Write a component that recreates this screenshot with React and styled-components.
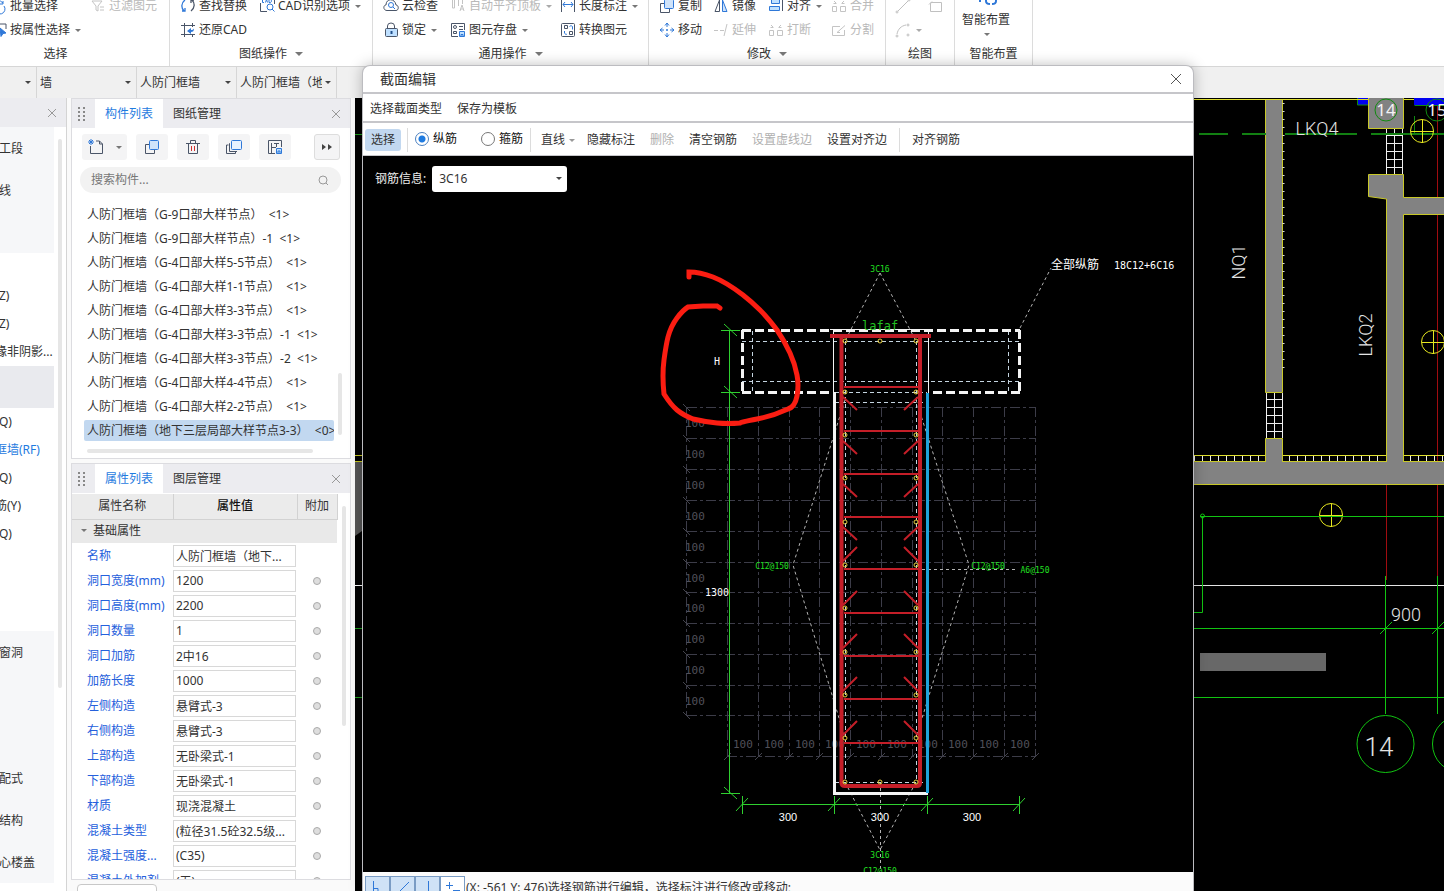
import React, { useState } from "react";
import styled, { createGlobalStyle } from "styled-components";

const GlobalStyle = createGlobalStyle`
  * { box-sizing: border-box; }
  body {
    margin: 0;
    overflow: hidden;
    background: #fff;
    color: #333;
    font: 12px/16px "Noto Sans", "Noto Sans CJK SC", sans-serif;
  }
  button, input, select { font: inherit; color: inherit; margin: 0; }
  button { padding: 0; border: 0; background: none; white-space: nowrap; }
  ul { margin: 0; padding: 0; list-style: none; }
`;

const Page = styled.div`
  position: relative;
  display: flex;
  flex-direction: column;
  height: 100vh;
  overflow: hidden;
`;

/* ribbon */
const Ribbon = styled.header`
  display: flex;
  align-items: flex-end;
  flex: none;
  height: 66px;
  margin-left: -58px;
  overflow: hidden;
  background: #fff;
`;
const Group = styled.section`
  flex: none;
  width: ${(p) => p.$width}px;
  height: 72px;
  border-right: 1px solid #dcdcdc;
`;
const ToolGrid = styled.div`
  display: grid;
  grid-template-columns: ${(p) => p.$cols};
  grid-auto-rows: 24px;
  height: 48px;
  padding-left: ${(p) => p.$pad}px;
`;
const Tool = styled.button`
  display: flex;
  align-items: center;
  gap: 3px;
  color: ${(p) => (p.disabled ? "#b9b9b9" : "#333")};
`;
const BigTool = styled.button`
  display: flex;
  flex-direction: column;
  align-items: center;
  justify-content: flex-end;
  gap: 5px;
  width: 48px;
  height: 48px;
  margin-left: 7px;
  padding-bottom: 6px;
`;
const GroupLabel = styled.div`
  display: flex;
  align-items: center;
  justify-content: center;
  gap: 6px;
  height: 23px;
`;
const Caret = styled.i`
  flex: none;
  border: ${(p) => p.$size || 3}px solid transparent;
  border-top-color: ${(p) => p.$color || "#777"};
  border-bottom: 0;
  margin-left: 2px;
`;

/* selector strip */
const Strip = styled.div`
  display: flex;
  flex: none;
  height: 32px;
  background: #f0f0f0;
  border-top: 1px solid #d6d6d6;
`;
const Picker = styled.div`
  display: grid;
  align-items: center;
  flex: none;
  width: ${(p) => p.$width}px;
  border-right: 1px solid #d6d6d6;
  select {
    grid-area: 1 / 1;
    width: 100%;
    height: 100%;
    padding: 0 14px 0 3px;
    border: 0;
    outline: 0;
    background: none;
    appearance: none;
  }
  i {
    grid-area: 1 / 1;
    justify-self: end;
    margin-right: 5px;
    pointer-events: none;
  }
`;

const Main = styled.div`
  display: flex;
  flex: 1;
  min-height: 0;
  background: #fafafa;
`;

/* module tree at the left edge */
const Modules = styled.nav`
  flex: none;
  width: 67px;
  overflow: hidden;
  background: #fff;
  border-right: 1px solid #d4d4d4;
`;
const ModulesHead = styled.div`
  display: flex;
  align-items: center;
  justify-content: flex-end;
  height: 29px;
  padding-right: 6px;
  background: #ececf0;
`;
const ModulesBody = styled.div`
  display: flex;
  justify-content: space-between;
  align-items: flex-start;
  padding-right: 4px;
`;
const ModuleList = styled.ul`
  width: 54px;
`;
const Module = styled.li`
  height: ${(p) => p.$height}px;
  background: ${(p) => p.$bg || "transparent"};
  a {
    display: block;
    margin-left: ${(p) => (p.$cut ? -5 : -1)}px;
    padding-top: ${(p) => (p.$height > 28 ? 1 : 0)}px;
    line-height: ${(p) => p.$height}px;
    color: ${(p) => (p.$active ? "#1f7be0" : "#333")};
    text-decoration: none;
    white-space: nowrap;
  }
`;
const Thumb = styled.div`
  flex: none;
  width: 4px;
  height: ${(p) => p.$height}px;
  margin-top: ${(p) => p.$top || 0}px;
  border-radius: 2px;
  background: #e6e6e6;
`;

/* docked panels */
const Dock = styled.aside`
  display: flex;
  flex-direction: column;
  flex: none;
  gap: 4px;
  width: 288px;
  padding: 0 4px;
`;
const Panel = styled.section`
  flex: ${(p) => (p.$height ? "none" : "1")};
  height: ${(p) => (p.$height ? p.$height + "px" : "auto")};
  min-height: 0;
  overflow: hidden;
  background: #fff;
  border: 1px solid #dcdce0;
`;
const PanelHead = styled.div`
  display: flex;
  align-items: center;
  height: 29px;
  padding-right: 6px;
  background: #ececf0;
  > svg { margin-right: 7px; }
  button:last-child { margin-left: auto; }
`;
const PanelTab = styled.button`
  width: 68px;
  height: 29px;
  color: ${(p) => (p.$active ? "#1f7be0" : "#333")};
  background: ${(p) => (p.$active ? "#fff" : "none")};
`;
const CloseButton = styled.button`
  display: flex;
  color: ${(p) => p.$color || "#999"};
`;
const PanelTools = styled.div`
  display: flex;
  gap: 9px;
  padding: 6px 10px 7px;
`;
const PanelTool = styled.button`
  display: flex;
  align-items: center;
  justify-content: center;
  gap: ${(p) => (p.$split ? 10 : 0)}px;
  width: ${(p) => (p.$split ? 45 : 32)}px;
  height: 26px;
  border-radius: 3px;
  background: #f4f4f5;
  &:last-child {
    width: 26px;
    margin-left: auto;
    border: 1px solid #ddd;
  }
`;
const Search = styled.label`
  display: flex;
  align-items: center;
  height: 26px;
  margin: 0 9px 10px 8px;
  padding: 0 10px 0 11px;
  border-radius: 13px;
  background: #f2f2f2;
  input {
    flex: 1;
    min-width: 0;
    padding: 0;
    border: 0;
    outline: 0;
    background: none;
  }
  input::placeholder { color: #777; opacity: 1; }
`;
const ListArea = styled.div`
  display: flex;
  padding-left: 12px;
`;
const Components = styled.ul`
  width: 250px;
  margin-right: 4px;
`;
const ComponentRow = styled.li`
  height: 24px;
  padding-top: 1px;
  button {
    width: 100%;
    height: 21px;
    padding: 0 3px;
    overflow: hidden;
    border-radius: 2px;
    text-align: left;
    white-space: pre;
    background: ${(p) => (p.$selected ? "#c2d8f0" : "none")};
  }
`;
const HThumb = styled.div`
  width: 226px;
  height: 4px;
  margin: 6px 0 0 15px;
  border-radius: 2px;
  background: #e6e6e6;
`;

const PropertyArea = styled.div`
  display: flex;
  align-items: flex-start;
  gap: 4px;
  padding-top: 1px;
`;
const PropertyTable = styled.table`
  width: 265px;
  flex: none;
  table-layout: fixed;
  border-collapse: collapse;
  th, td { padding: 0; font-weight: 400; text-align: left; white-space: nowrap; }
  thead th {
    height: 25px;
    text-align: center;
    background: #ebebeb;
    border: solid #d2d2d2;
    border-width: 0 1px 1px 0;
  }
  thead th:nth-child(2) { font-weight: 500; color: #111; }
`;
const SectionCell = styled.th`
  height: 24px;
  background: #e9e9e9;
  i { display: inline-block; margin: 0 6px 3px 9px; }
`;
const PropertyRow = styled.tr`
  height: 25px;
  th { padding-left: 15px; color: #2560dc; }
  input[type="text"] {
    display: block;
    width: 123px;
    height: 22px;
    padding: 0 2px;
    border: 1px solid #d8d8d8;
    outline: 0;
    text-overflow: ellipsis;
  }
  input[type="checkbox"] {
    display: block;
    width: 8px;
    height: 8px;
    margin: 0 auto;
    border: 1px solid #aaa;
    border-radius: 50%;
    background: #dedede;
    appearance: none;
  }
`;
const DockFoot = styled.div`
  flex: none;
  height: 7px;
  padding-left: 6px;
  overflow: hidden;
  button {
    display: block;
    width: 80px;
    height: 24px;
    border: 1px solid #c8c8c8;
    border-radius: 4px;
    background: #fff;
  }
`;

const ModelView = styled.div`
  display: flex;
  justify-content: space-between;
  flex: 1;
  min-width: 0;
  overflow: hidden;
  background: #000;
  svg { flex: none; }
`;

/* section editor window */
const Dialog = styled.div`
  position: absolute;
  top: 65px;
  left: 362px;
  right: 250px;
  bottom: 0;
  display: flex;
  flex-direction: column;
  overflow: hidden;
  background: #fff;
  border: 1px solid #bcbcc0;
  border-bottom: 0;
  border-radius: 8px 8px 0 0;
  box-shadow: 0 0 14px rgba(0, 0, 0, 0.25);
`;
const TitleBar = styled.div`
  display: flex;
  align-items: center;
  justify-content: space-between;
  flex: none;
  height: 28px;
  padding: 0 9px 0 17px;
  font-size: 14px;
  border-bottom: 2px solid #c6c6ca;
`;
const MenuBar = styled.div`
  display: flex;
  align-items: center;
  flex: none;
  gap: 15px;
  height: 29px;
  padding: 2px 0 0 7px;
  border-bottom: 2px solid #c6c6ca;
`;
const ToolBar = styled.div`
  display: flex;
  align-items: center;
  flex: none;
  height: 33px;
  padding: 2px 0 0 2px;
  border-bottom: 1px solid #c6c6ca;
`;
const ToolBarButton = styled.button`
  display: flex;
  align-items: center;
  gap: 2px;
  height: 22px;
  margin-right: ${(p) => (p.$on ? 6 : p.$tight ? 12 : 15)}px;
  padding: 0 ${(p) => (p.$on ? 6 : 0)}px;
  border-radius: 3px;
  background: ${(p) => (p.$on ? "#c2d8f0" : "none")};
  color: ${(p) => (p.disabled ? "#b0b0b0" : "#333")};
`;
const Divider = styled.span`
  width: 1px;
  height: 24px;
  margin-right: ${(p) => p.$after}px;
  background: #dcdcdc;
`;
const RadioLabel = styled.label`
  display: flex;
  align-items: center;
  gap: 4px;
  width: 66px;
  margin-bottom: 2px;
  color: #111;
  &:last-of-type { width: 49px; }
  input {
    width: 14px;
    height: 14px;
    border: 1px solid #777;
    border-radius: 50%;
    background: #fff;
    appearance: none;
  }
  input:checked {
    border-color: #4a7fc0;
    background: radial-gradient(circle, #1f7be0 3px, #fff 4px);
  }
`;
const SectionView = styled.div`
  display: flex;
  flex-direction: column;
  flex: 1;
  min-height: 0;
  background: #000;
  svg { flex: 1; min-height: 0; width: 100%; }
`;
const RebarBar = styled.div`
  display: flex;
  align-items: center;
  flex: none;
  gap: 6px;
  height: 36px;
  padding: 9px 12px 0;
  color: #eee;
  ${Picker} {
    height: 26px;
    border: 0;
    border-radius: 3px;
    background: #fff;
    color: #333;
  }
  select { padding-left: 7px; }
`;
const StatusBar = styled.div`
  display: flex;
  align-items: flex-start;
  flex: none;
  height: 19px;
  overflow: hidden;
  padding: 4px 2px 0;
  background: #fbfbfb;
  span { line-height: 24px; margin-left: 1px; white-space: nowrap; }
`;
const SnapButton = styled.button`
  display: flex;
  align-items: center;
  justify-content: center;
  flex: none;
  width: 25px;
  height: 24px;
  border: 1px solid #7a9cc4;
  background: ${(p) => (p.$on ? "#cfe2f6" : "#fff")};
`;

const BLUE = "#2f78d8";
const INK = "#4a5568";
const icons = {
  batch: <path d="M3 8a5 5 0 0 1 9-3M12 3v3H9M13 8a5 5 0 1 1-9 3" stroke={BLUE} />,
  filter: (
    <path d="M2 3h10L8 8v5l-2-1V8zM10 9h4M10 12h4" stroke="#c4c4c4" />
  ),
  pick: (
    <g>
      <path d="M2 2h13v5M2 2v11h4" stroke={INK} />
      <path d="M9 6l6 5-3 .5-2 3z" fill={BLUE} stroke={BLUE} />
    </g>
  ),
  find: (
    <g>
      <path d="M5 2C1 5 1 10 4 13M2 13h3v-3" stroke={BLUE} strokeWidth="1.300" />
      <path d="M11 13c4-3 4-8 1-11M14 2h-3v3" stroke={INK} strokeWidth="1.300" />
    </g>
  ),
  cad: (
    <g>
      <path d="M1.500 5v8.500H8M4 .5H2M14 .5h1.500V6" stroke={INK} />
      <path d="M5 4.500H3.500v-3H5M6.500 4.500l1-3 1 3M10 4.500v-3h1c2 0 2 3 0 3z" stroke={BLUE} />
      <circle cx="11" cy="9" r="3" stroke={BLUE} />
      <path d="M13 11l2.500 2.500" stroke={BLUE} />
    </g>
  ),
  restore: (
    <g>
      <path d="M1 3.500h14M4.500 1v14M1 12.500h14M12.500 1v4M12.500 12v3" stroke={INK} />
      <path d="M7 9l4-3v2c3 0 3-2 3-2 0 3-1 4-3 4v2z" fill={BLUE} />
    </g>
  ),
  cloud: (
    <g>
      <path d="M4 12.500C0 12.500 0 7 3 7c0-7 9-7 10 0 3 0 3 5.500 0 5.500z" stroke={INK} />
      <circle cx="8" cy="7" r="2.500" stroke={BLUE} />
      <path d="M10 9l2 2" stroke={BLUE} />
    </g>
  ),
  flush: (
    <path d="M2.500 1v9h2V1M8.500 1v7M12.500 1v5M10 13l2-6 2 6M10.500 11h3" stroke="#c4c4c4" />
  ),
  length: (
    <g>
      <path d="M1.500 1v13M14.500 1v13" stroke={INK} />
      <path d="M3 6.500h10M5 4L3 6.500 5 9M11 4l2 2.500L11 9" stroke={BLUE} />
    </g>
  ),
  lock: (
    <g>
      <path d="M4.500 6V4a3.500 3 0 0 1 7 0v2" stroke={INK} />
      <rect x="2.500" y="6.500" width="12" height="8" rx="1" fill="#bfe0ff" stroke={INK} />
      <path d="M8.500 9v3" stroke="#20508c" strokeWidth="2" />
    </g>
  ),
  store: (
    <g>
      <path d="M8 14.500H1.500v-13h13V8M9 4.500h4M9 7.500h4" stroke={INK} />
      <circle cx="5" cy="5" r="1.500" stroke={INK} />
      <path d="M3.500 9.500h3v2h-3z" stroke={INK} />
      <path d="M9.500 9.500h5v5h-5zM11 12.500h2v2h-2z" stroke={BLUE} fill="#bfe0ff" />
    </g>
  ),
  convert: (
    <g>
      <rect x="1.500" y="1.500" width="13" height="13" rx="1" stroke={INK} />
      <path d="M4.500 3.500h3v3h-3zM9.500 9.500h3v3h-3z" stroke={INK} />
      <path d="M9.500 4.500c1-1 2-1 3 0v3M7 12c-1 1-2 0-2.500-1V9" stroke={BLUE} />
    </g>
  ),
  copy: (
    <g>
      <path d="M5 5.500H1.500v9h9V11" stroke={INK} />
      <rect x="5.500" y="1.500" width="9" height="9" rx="1" fill="#cfe3fa" stroke={BLUE} />
    </g>
  ),
  move: (
    <g stroke={BLUE}>
      <path d="M8 1v4M8 11v4M1 8h4M11 8h4M8 7v2M7 8h2" />
      <path d="M6 3.500L8 1l2 2.500M6 12.500L8 15l2-2.500M3.500 6L1 8l2.500 2M12.500 6L15 8l-2.500 2" />
    </g>
  ),
  mirror: (
    <g>
      <path d="M6.500 2v11.500H2z" stroke={INK} />
      <path d="M9.500 2v11.500H14z" fill="#cfe3fa" stroke={BLUE} />
    </g>
  ),
  extend: <path d="M1 8.500h4M7 8.500h4M11 14l3-12" stroke="#c4c4c4" />,
  align: (
    <g>
      <path d="M3.500 1.500h8v4h-8zM1.500 8.500h10v4h-10z" fill="#bfe0ff" stroke={BLUE} />
      <path d="M14.500 0v13" stroke={INK} />
    </g>
  ),
  pieces: (
    <path
      d="M1.500 8.500h4v5h-4zM9.500 8.500h5v5h-5zM3 3l2 2M13 3l-2 2M2.500 5.500h3M10.500 5.500h3"
      stroke="#c4c4c4"
    />
  ),
  split: <path d="M9 4.500H1.500v9h12V8M6 10.500l8-7M6 10.500h3" stroke="#c4c4c4" />,
  line: (
    <g stroke="#c0c0c0">
      <path d="M3 13L13 3" />
      <circle cx="2" cy="14" r="1" />
      <circle cx="14" cy="2" r="1" />
    </g>
  ),
  rect: <path d="M3 4.500h10.500v9H2.500V6zM1 6.500l3-3" stroke="#c0c0c0" />,
  arc: (
    <g stroke="#c0c0c0">
      <path d="M2 12c1-5 4-8 9-9" />
      <circle cx="2" cy="14" r="1" />
      <circle cx="13" cy="3" r="1" />
      <circle cx="13" cy="13" r="1" />
    </g>
  ),
  smart: (
    <g stroke={BLUE} strokeWidth="2">
      <path d="M2 8v3M8 6v4q0 3 4 3M18 6v4q0 3-4 3" />
    </g>
  ),
  newDoc: (
    <g>
      <path d="M2.500 7v7.500h12V5l-3-3H8M11.500 2v3h3" stroke={INK} />
      <path d="M1 1l4 4M5 1L1 5M3 0v6M0 3h6" stroke={BLUE} />
    </g>
  ),
  trash: (
    <g>
      <path d="M1 4.500h14M5.500 4V1.500h5V4M3.500 4.500v10h9v-10" stroke={INK} />
      <path d="M6.500 7v5M9.500 7v5" stroke="#d03030" />
    </g>
  ),
  layers: (
    <g>
      <path d="M2.500 6H.5v8.500h9v-2M4 4.500H3.500v8H11" stroke={INK} />
      <rect x="5.500" y="1.500" width="10" height="9" rx="1" fill="#e8f2ff" stroke={BLUE} />
    </g>
  ),
  save: (
    <g>
      <path d="M8 14.500H1.500v-13h13V8M4.500 14V4M4.500 8.500H9M9.500 4v4M12 4.500H7" stroke={INK} />
      <path d="M9.500 9.500h5v5h-5zM11 12h2v2.500h-2z" stroke={BLUE} fill="#bfe0ff" />
    </g>
  ),
  more: <path d="M3 5l4 3-4 3zM9 5l4 3-4 3z" fill="#444" />,
  search: (
    <g stroke="#999">
      <circle cx="8" cy="8" r="4" />
      <path d="M11 11l2 2" />
    </g>
  ),
  close: <path d="M4 4l8 8M12 4l-8 8" stroke="currentColor" />,
  bigClose: <path d="M3 3l10 10M13 3L3 13" stroke="currentColor" />,
  grip: (
    <path
      d="M6 2h2M11 2h2M6 6h2M11 6h2M6 10h2M11 10h2M6 14h2M11 14h2"
      stroke="#888"
      strokeWidth="2"
    />
  ),
  ortho: <path d="M3.500 1v11.500H12M3.500 8.500H8v4" stroke={BLUE} />,
  diagonal: <path d="M2 14L14 2" stroke={BLUE} />,
  vertical: <path d="M8.500 1v14" stroke={BLUE} />,
  cross: <path d="M1 5.500h7M4.500 2v7M8 10.500h7" stroke={BLUE} />,
};

const Icon = ({ name }) => (
  <svg width="16" height="16" viewBox="0 0 16 16" fill="none" overflow="visible" aria-hidden="true">
    {icons[name]}
  </svg>
);

const ribbonGroups = [
  {
    label: "选择",
    width: 228,
    pad: 49,
    cols: "99px 80px",
    tools: [
      { icon: "batch", text: "批量选择" },
      { icon: "filter", text: "过滤图元", disabled: true },
      { icon: "pick", text: "按属性选择", menu: true },
    ],
  },
  {
    label: "图纸操作",
    menu: true,
    width: 203,
    pad: 10,
    cols: "79px 110px",
    tools: [
      { icon: "find", text: "查找替换" },
      { icon: "cad", text: "CAD识别选项", menu: true },
      { icon: "restore", text: "还原CAD" },
    ],
  },
  {
    label: "通用操作",
    menu: true,
    width: 276,
    pad: 10,
    cols: "67px 110px 80px",
    tools: [
      { icon: "cloud", text: "云检查" },
      { icon: "flush", text: "自动平齐顶板", menu: true, disabled: true },
      { icon: "length", text: "长度标注", menu: true },
      { icon: "lock", text: "锁定", menu: true },
      { icon: "store", text: "图元存盘", menu: true },
      { icon: "convert", text: "转换图元" },
    ],
  },
  {
    label: "修改",
    menu: true,
    width: 237,
    pad: 10,
    cols: "54px 55px 63px 50px",
    tools: [
      { icon: "copy", text: "复制" },
      { icon: "mirror", text: "镜像" },
      { icon: "align", text: "对齐", menu: true },
      { icon: "pieces", text: "合并", disabled: true },
      { icon: "move", text: "移动" },
      { icon: "extend", text: "延伸", disabled: true },
      { icon: "pieces", text: "打断", disabled: true },
      { icon: "split", text: "分割", disabled: true },
    ],
  },
  {
    label: "绘图",
    width: 69,
    pad: 9,
    cols: "33px 20px",
    tools: [
      { icon: "line", hint: "直线", disabled: true },
      { icon: "rect", hint: "矩形", disabled: true },
      { icon: "arc", hint: "弧线", menu: true, disabled: true },
    ],
  },
];

const SECTION = "#f6f7f9";
const modules = [
  { text: "工段", height: 42, bg: SECTION },
  { text: "线", height: 42, bg: SECTION },
  { height: 42, bg: SECTION },
  { height: 29 },
  { text: "Z)", height: 28 },
  { text: "Z)", height: 28 },
  { text: "缘非阴影...", height: 28, cut: true },
  { height: 42, bg: "#e9eaee" },
  { text: "Q)", height: 28 },
  { text: "框墙(RF)", height: 28, cut: true, active: true },
  { text: "Q)", height: 28 },
  { text: "筋(Y)", height: 28, cut: true },
  { text: "Q)", height: 28 },
  { height: 83 },
  { text: "窗洞", height: 42, bg: SECTION },
  { height: 84, bg: SECTION },
  { text: "配式", height: 42, bg: SECTION },
  { text: "结构", height: 42, bg: SECTION },
  { text: "心楼盖", height: 42, bg: SECTION },
];

const componentNames = [
  "人防门框墙（G-9口部大样节点）  <1>",
  "人防门框墙（G-9口部大样节点）-1  <1>",
  "人防门框墙（G-4口部大样5-5节点）  <1>",
  "人防门框墙（G-4口部大样1-1节点）  <1>",
  "人防门框墙（G-4口部大样3-3节点）  <1>",
  "人防门框墙（G-4口部大样3-3节点）-1  <1>",
  "人防门框墙（G-4口部大样3-3节点）-2  <1>",
  "人防门框墙（G-4口部大样4-4节点）  <1>",
  "人防门框墙（G-4口部大样2-2节点）  <1>",
  "人防门框墙（地下三层局部大样节点3-3）  <0>",
];

const properties = [
  ["名称", "人防门框墙（地下..."],
  ["洞口宽度(mm)", "1200"],
  ["洞口高度(mm)", "2200"],
  ["洞口数量", "1"],
  ["洞口加筋", "2中16"],
  ["加筋长度", "1000"],
  ["左侧构造", "悬臂式-3"],
  ["右侧构造", "悬臂式-3"],
  ["上部构造", "无卧梁式-1"],
  ["下部构造", "无卧梁式-1"],
  ["材质", "现浇混凝土"],
  ["混凝土类型", "(粒径31.5砼32.5级..."],
  ["混凝土强度...", "(C35)"],
  ["混凝土外加剂", "(无)"],
];

const MONO = '"DejaVu Sans Mono", "Noto Sans CJK SC", monospace';
const SANS = '"Liberation Sans", "Noto Sans CJK SC", sans-serif';
const PLAN = "Roboto, sans-serif";

// the wall section: stem, flange, stirrups, bars and dimensions
const gridX = [727, 758, 789, 819, 850, 881, 912, 942, 973, 1004, 1035];
const gridY = [407, 438, 469, 500, 531, 562, 592, 623, 654, 685, 715];
const rungs = [387, 431, 474, 517, 569, 613, 656, 699, 743];
const bars = [341, 392, 435, 478, 522, 565, 608, 652, 695, 738, 782];

const SectionDrawing = () => (
  <svg viewBox="363 192 830 680" fill="none" role="img" aria-label="截面图">
    <g stroke="#3c3c48" strokeDasharray="10 3 3 3" shapeRendering="crispEdges">
      {gridX.map((x) => (
        <path key={x} d={`M${x}.5 407V757`} />
      ))}
      {gridY.map((y) => (
        <path key={y} d={`M687 ${y}.5H1036`} />
      ))}
      <path d="M686.500 407V715M727 756.500H1036" />
    </g>
    <g stroke="#44444e">
      {gridX.map((x) => (
        <path key={x} d={`M${x - 3} 760l7-7`} />
      ))}
      {gridY.map((y) => (
        <path key={y} d={`M683 ${y - 3}l7 7`} />
      ))}
    </g>
    <g fill="#50505a" fontFamily={MONO} fontSize="11">
      {gridX.slice(0, 10).map((x) => (
        <text key={x} x={x + 6} y="748">100</text>
      ))}
      {gridY.slice(0, 10).map((y) => (
        <text key={y} x="685" y={y + 20}>100</text>
      ))}
    </g>

    <g stroke="#b4b4b4" strokeDasharray="3 3">
      <path d="M880 273L845 341M880 273L916 341" />
      <path d="M845 400L793 565L845 738M916 400L969 565L916 738" />
      <path d="M845 782L880 850L916 782M880.500 782V872M880 569.500H1018M1020 328L1051 268" />
    </g>

    <g stroke="#c4d4e0" strokeDasharray="4 3" shapeRendering="crispEdges">
      <path d="M742 341.500H1020M742 381.500H1020M752.500 331V392M1008.500 331V392" />
      <path d="M845.500 341V782M916.500 341V782M835 392.500H927M835 402.500H927M835 782.500H927" />
    </g>
    <g stroke="#f4f4f4" strokeWidth="3" shapeRendering="crispEdges">
      <path
        d="M742 330.500H1020M742.500 330V392M1019.500 330V392M742 392.500H834M1020 392.500H928"
        strokeDasharray="9 4"
      />
      <path d="M834.500 392V793.500H928" />
      <path d="M833.500 330V392M928.500 330V392M830 329.500H932" strokeWidth="1" />
    </g>
    <path d="M927.500 393V793" stroke="#1fa3da" strokeWidth="3" />

    <g stroke="#c41e28">
      <path d="M830 336H931" strokeWidth="4" />
      <path d="M841.500 338V783Q841.500 786 845 786H917Q920 786 920 783V338" strokeWidth="4" />
      {rungs.map((y, i) => (
        <path
          key={y}
          strokeWidth="2"
          d={
            i < 4
              ? `M844 ${y}H918M843 ${y + 10}l14 13M918 ${y + 10}l-14 13`
              : `M844 ${y}H918M843 ${y - 8}l14 -14M918 ${y - 8}l-14 -14`
          }
        />
      ))}
    </g>
    <g stroke="#e8d040">
      {bars.map((y) => (
        <g key={y}>
          <circle cx="845" cy={y} r="2" />
          <circle cx="916" cy={y} r="2" />
        </g>
      ))}
      <circle cx="880" cy="341" r="2" />
      <circle cx="880" cy="782" r="2" />
    </g>

    <g stroke="#2fd02f">
      <path d="M729.500 330V793M721 330.500H740M721 392.500H740M721 793.500H740" />
      <path d="M724 324l13 12M724 386l13 12M724 787l13 12" />
      <path d="M742 804.500H1020" />
      {[742, 834, 927, 1019].map((x) => (
        <path key={x} d={`M${x}.5 796V814M${x - 6} 811l12 -13`} />
      ))}
    </g>

    <g fill="#22e022" fontFamily={MONO} fontSize="8" textAnchor="middle">
      <text x="880" y="272">3C16</text>
      <text x="772" y="569">C12@150</text>
      <text x="988" y="569">C12@150</text>
      <text x="1035" y="573">A6@150</text>
      <text x="880" y="858">3C16</text>
      <text x="880" y="874">C12@150</text>
    </g>
    <text x="862" y="330" fill="#22c022" fontFamily={MONO} fontSize="12">lafaf</text>
    <g fill="#fff" fontFamily={MONO} fontSize="10">
      <text x="714" y="365">H</text>
      <text x="705" y="596">1300</text>
      <text x="1051" y="269" fontSize="12">全部纵筋</text>
      <text x="1114" y="269">18C12+6C16</text>
    </g>
    <g fill="#fff" fontFamily={SANS} fontSize="11" textAnchor="middle">
      <text x="788" y="821">300</text>
      <text x="880" y="821">300</text>
      <text x="972" y="821">300</text>
    </g>

    <path
      d="M689 277V272Q700 272 713 277T743 295Q752 302 760 310T777 330Q785 342 790 353T797 375Q799 385 797 396T788 409Q773 416 757 419T740 423Q728 424 717 423T693 419Q683 415 677 410T664 394Q662 375 664 360T668 337Q671 326 677 318T688 307L703 306H717L720 308"
      stroke="#fb1d12"
      strokeWidth="5"
      strokeLinecap="round"
    />
  </svg>
);

const Fixture = ({ x, y }) => (
  <g stroke="#e8e820">
    <circle cx={x} cy={y} r="11.500" />
    <path d={`M${x - 11} ${y}.5h23M${x}.5 ${y - 11}v23`} />
  </g>
);

const range = (from, to, step) => {
  const list = [];
  for (let v = from; v < to; v += step) list.push(v);
  return list;
};

const PlanEdge = () => (
  <svg width="7" height="793" viewBox="355 98 7 793" aria-hidden="true">
    <path d="M355 461h7v70l-7 5z" fill="#555" />
    <path d="M355 134.500h7M355 628.500h7M355 697.500h7" stroke="#1c9a1c" />
    <path d="M355 455.500h7M355 461.500h7" stroke="#c8c820" />
    <path d="M355 585.500h7" stroke="#fff" />
  </svg>
);

const PlanDrawing = () => (
  <svg width="250" height="793" viewBox="1194 98 250 793" fill="none" role="img" aria-label="平面图">
    <path d="M1437.500 98V625M1386.500 484V580" stroke="#a00c10" />
    <path d="M1357 98h12v7h-12zM1414 98h30v7h-30z" fill="#0000f0" />
    <path d="M1357.500 98v7h11M1414.500 105.500H1444M1414.500 116v18" stroke="#108a10" />
    <g fill="#828282" stroke="#c8c828">
      <path d="M1265.500 99V392.500H1282.500V99" />
      <path d="M1265.500 461V438.500H1282.500V461" />
      <path d="M1368.500 98V128.500H1403.500V98" />
      <path d="M1386.500 461V199L1368.500 196.500V174.500H1403.500V197.500H1446V214.500H1403.500V461" />
      <path d="M1192 461.500H1446V484.500H1192z" />
    </g>
    <path d="M1266 458h16v8h-16zM1387 458h16v8h-16z" fill="#828282" />
    <path
      d="M1194 99.500H1368M1404 99.500H1414M1194 455.500H1265M1283 455.500H1386M1404 455.500H1444"
      stroke="#e0e030"
    />
    <path d="M1283.500 103V370" stroke="#ddd" strokeWidth="2" strokeDasharray="1 7" />
    <g stroke="#f0f0f0" shapeRendering="crispEdges">
      <path d="M1266.500 393V438M1274.500 393V438M1282.500 393V438" />
      {range(399, 438, 8).map((y) => (
        <path key={y} d={`M1266 ${y}.5h16`} />
      ))}
      <path d="M1386.500 129V174M1394.500 129V174M1402.500 129V174" />
      {range(135, 174, 8).map((y) => (
        <path key={y} d={`M1386 ${y}.5h17`} />
      ))}
      {range(1194, 1264, 8).concat(range(1289, 1384, 8), range(1410, 1444, 8)).map((x) => (
        <path key={x} d={`M${x}.5 456v5`} />
      ))}
    </g>
    <path
      d="M1199 134h29M1242 134h24M1285 134h72M1371 134h73"
      stroke="#128012"
      strokeWidth="2"
    />
    <g stroke="#108a10">
      <circle cx="1386" cy="110" r="11" />
      <circle cx="1437" cy="110" r="11" />
    </g>
    <Fixture x={1422} y={131} />
    <Fixture x={1433} y={342} />
    <Fixture x={1331} y={515} />
    <path d="M1194 585.500H1444" stroke="#e4e4e4" />
    <g stroke="#12c412">
      <path d="M1200 516.500H1444M1202.500 516V612.500H1194M1194 628.500H1444M1194 697.500H1444" />
      <path d="M1385.500 576V714M1437.500 576V714M1380 634l12-12M1432 634l12-12" />
      <circle cx="1202.500" cy="516" r="2" />
      <circle cx="1385.500" cy="744" r="28.500" />
      <circle cx="1461" cy="744" r="28.500" />
    </g>
    <path d="M1200 653h126v18h-126z" fill="#686868" />
    <g fill="#f4f4f4" fontFamily='"Noto Sans", sans-serif' fontSize="17" textAnchor="middle">
      <text x="1386" y="116">14</text>
      <text x="1437" y="116">15</text>
    </g>
    <g fill="#e4e4e4" fontFamily={PLAN} fontSize="18" fontWeight="300" textAnchor="middle">
      <text x="1317" y="135">LKQ4</text>
      <text transform="translate(1245 262) rotate(-90)">NQ1</text>
      <text transform="translate(1372 335) rotate(-90)">LKQ2</text>
      <text x="1406" y="621">900</text>
      <text x="1379" y="756" fontSize="26">14</text>
    </g>
  </svg>
);

const PickList = ({ label, value, width }) => (
  <Picker $width={width}>
    <select aria-label={label}>
      <option>{value}</option>
    </select>
    <Caret $color="#444" />
  </Picker>
);

const PanelHeader = ({ tabs }) => (
  <PanelHead>
    <Icon name="grip" />
    {tabs.map((tab, i) => (
      <PanelTab key={tab} $active={i === 0}>
        {tab}
      </PanelTab>
    ))}
    <CloseButton aria-label="关闭">
      <Icon name="close" />
    </CloseButton>
  </PanelHead>
);

const App = () => {
  const [selected, setSelected] = useState(9);
  const [barType, setBarType] = useState("纵筋");

  return (
    <Page>
      <GlobalStyle />
      <Ribbon>
        {ribbonGroups.map((group) => (
          <Group key={group.label} $width={group.width}>
            <ToolGrid $cols={group.cols} $pad={group.pad}>
              {group.tools.map((tool) => (
                <Tool
                  key={tool.text || tool.icon}
                  disabled={tool.disabled}
                  aria-label={tool.hint}
                >
                  <Icon name={tool.icon} />
                  {tool.text}
                  {tool.menu && <Caret $color={tool.disabled ? "#aaa" : "#777"} />}
                </Tool>
              ))}
            </ToolGrid>
            <GroupLabel>
              {group.label}
              {group.menu && <Caret $size={4} />}
            </GroupLabel>
          </Group>
        ))}
        <Group $width={78}>
          <BigTool>
            <Icon name="smart" />
            智能布置
            <Caret />
          </BigTool>
          <GroupLabel>智能布置</GroupLabel>
        </Group>
      </Ribbon>

      <Strip>
        <PickList label="楼层" value="" width={37} />
        <PickList label="构件大类" value="墙" width={100} />
        <PickList label="构件类型" value="人防门框墙" width={100} />
        <PickList label="构件" value="人防门框墙（地" width={100} />
      </Strip>

      <Main>
        <Modules>
          <ModulesHead>
            <CloseButton aria-label="关闭">
              <Icon name="close" />
            </CloseButton>
          </ModulesHead>
          <ModulesBody>
            <ModuleList>
              {modules.map((item, i) => (
                <Module
                  key={i}
                  $height={item.height}
                  $bg={item.bg}
                  $cut={item.cut}
                  $active={item.active}
                >
                  {item.text && <a href="#module">{item.text}</a>}
                </Module>
              ))}
            </ModuleList>
            <Thumb $height={549} $top={12} />
          </ModulesBody>
        </Modules>

        <Dock>
          <Panel $height={361}>
            <PanelHeader tabs={["构件列表", "图纸管理"]} />
            <PanelTools>
              <PanelTool $split aria-label="新建">
                <Icon name="newDoc" />
                <Caret />
              </PanelTool>
              <PanelTool aria-label="复制">
                <Icon name="copy" />
              </PanelTool>
              <PanelTool aria-label="删除">
                <Icon name="trash" />
              </PanelTool>
              <PanelTool aria-label="层间复制">
                <Icon name="layers" />
              </PanelTool>
              <PanelTool aria-label="存档">
                <Icon name="save" />
              </PanelTool>
              <PanelTool aria-label="更多">
                <Icon name="more" />
              </PanelTool>
            </PanelTools>
            <Search>
              <input type="text" aria-label="搜索构件" placeholder="搜索构件..." />
              <Icon name="search" />
            </Search>
            <ListArea>
              <Components>
                {componentNames.map((name, i) => (
                  <ComponentRow key={name} $selected={i === selected}>
                    <button onClick={() => setSelected(i)}>{name}</button>
                  </ComponentRow>
                ))}
              </Components>
              <Thumb $height={62} $top={170} />
            </ListArea>
            <HThumb />
          </Panel>

          <Panel>
            <PanelHeader tabs={["属性列表", "图层管理"]} />
            <PropertyArea>
              <PropertyTable>
                <colgroup>
                  <col width="101" />
                  <col width="124" />
                  <col width="40" />
                </colgroup>
                <thead>
                  <tr>
                    <th>属性名称</th>
                    <th>属性值</th>
                    <th>附加</th>
                  </tr>
                </thead>
                <tbody>
                  <tr>
                    <SectionCell colSpan={3}>
                      <Caret />
                      基础属性
                    </SectionCell>
                  </tr>
                  {properties.map(([name, value], i) => (
                    <PropertyRow key={name}>
                      <th scope="row">
                        <label htmlFor={`prop-${i}`}>{name}</label>
                      </th>
                      <td>
                        <input type="text" id={`prop-${i}`} defaultValue={value} />
                      </td>
                      <td>
                        {i > 0 && <input type="checkbox" aria-label={`附加 ${name}`} />}
                      </td>
                    </PropertyRow>
                  ))}
                </tbody>
              </PropertyTable>
              <Thumb $height={220} $top={12} />
            </PropertyArea>
          </Panel>
          <DockFoot>
            <button aria-label="参数图" />
          </DockFoot>
        </Dock>

        <ModelView>
          <PlanEdge />
          <PlanDrawing />
        </ModelView>
      </Main>

      <Dialog role="dialog" aria-label="截面编辑">
        <TitleBar>
          截面编辑
          <CloseButton $color="#555" aria-label="关闭">
            <Icon name="bigClose" />
          </CloseButton>
        </TitleBar>
        <MenuBar>
          <button>选择截面类型</button>
          <button>保存为模板</button>
        </MenuBar>
        <ToolBar>
          <ToolBarButton $on>选择</ToolBarButton>
          <Divider $after={7} />
          {["纵筋", "箍筋"].map((type) => (
            <RadioLabel key={type}>
              <input
                type="radio"
                name="barType"
                checked={barType === type}
                onChange={() => setBarType(type)}
              />
              {type}
            </RadioLabel>
          ))}
          <Divider $after={10} />
          <ToolBarButton $tight>
            直线
            <Caret $color="#999" />
          </ToolBarButton>
          <ToolBarButton>隐藏标注</ToolBarButton>
          <ToolBarButton disabled>删除</ToolBarButton>
          <ToolBarButton>清空钢筋</ToolBarButton>
          <ToolBarButton disabled>设置虚线边</ToolBarButton>
          <ToolBarButton $tight>设置对齐边</ToolBarButton>
          <Divider $after={12} />
          <ToolBarButton>对齐钢筋</ToolBarButton>
        </ToolBar>
        <SectionView>
          <RebarBar>
            钢筋信息:
            <PickList label="钢筋信息" value="3C16" width={135} />
          </RebarBar>
          <SectionDrawing />
        </SectionView>
        <StatusBar>
          <SnapButton $on aria-label="正交">
            <Icon name="ortho" />
          </SnapButton>
          <SnapButton $on aria-label="捕捉">
            <Icon name="diagonal" />
          </SnapButton>
          <SnapButton $on aria-label="垂直">
            <Icon name="vertical" />
          </SnapButton>
          <SnapButton aria-label="偏移">
            <Icon name="cross" />
          </SnapButton>
          <span>(X: -561 Y: 476)选择钢筋进行编辑，选择标注进行修改或移动;</span>
        </StatusBar>
      </Dialog>
    </Page>
  );
};

export default App;
